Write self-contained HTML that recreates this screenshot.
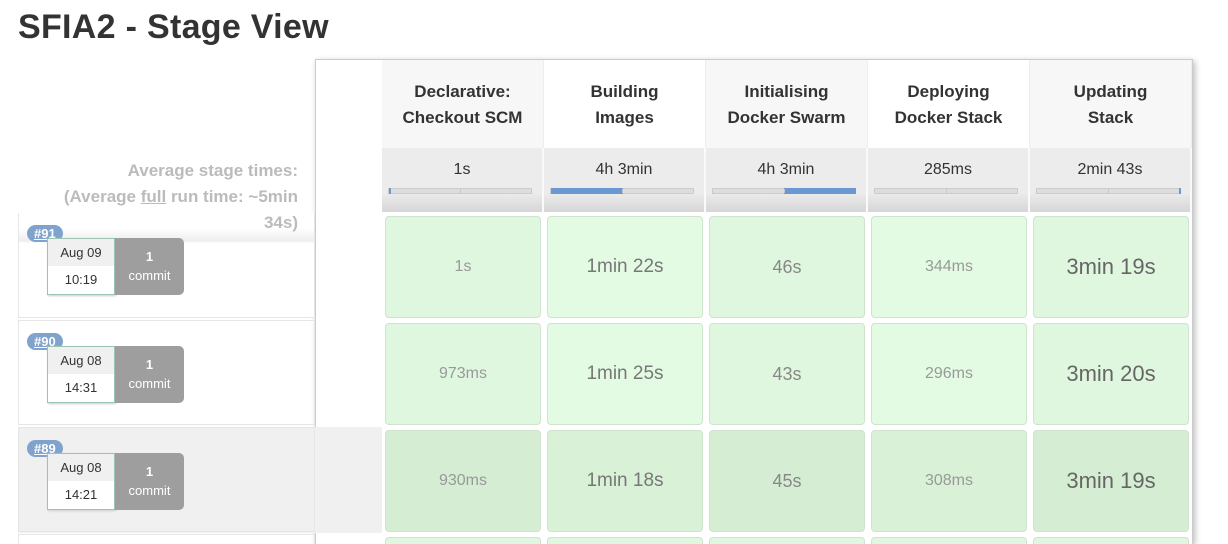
<!DOCTYPE html>
<html><head><meta charset="utf-8"><style>
*{margin:0;padding:0;box-sizing:border-box}
html,body{width:1228px;height:544px;overflow:hidden}
body{background:#fff;font-family:"Liberation Sans","DejaVu Sans",sans-serif;position:relative;color:#333}
.a{position:absolute}
h1{position:absolute;left:18px;top:8px;font-size:34px;font-weight:bold;color:#333;letter-spacing:0.3px}
.hd{position:absolute;top:60px;height:88px;width:162px;text-align:center;font-weight:bold;font-size:17px;line-height:26px;padding-top:19px;color:#333;border-right:1px solid #eee}
.av{position:absolute;top:148px;height:64px;width:162px;text-align:center;font-size:16px;padding-top:13px;background:linear-gradient(#ececec,#ececec 70%,#d6d6d6);border-right:2px solid #fafafa}
.bar{position:absolute;left:6px;top:40px;width:144px;height:6px;background:#ddd;border:1px solid #ccc}
.bar i{position:absolute;top:-1px;height:6px;background:#6b98d0}
.bar b{position:absolute;left:71px;top:0;width:1px;height:4px;background:#c8c8c8}
.c{position:absolute;width:156px;height:102px;border:1px solid #cfe3cf;border-radius:4px;text-align:center;line-height:100px;background:#e0f7df}
.r{position:absolute;left:18px;width:297px;border:1px solid #e6e6e6}
.tag{position:absolute;left:8px;top:12px;background:#7fa3cc;color:#fff;font-weight:bold;font-size:13px;border-radius:9px;padding:1px 7px;text-decoration:underline}
.dt{position:absolute;left:28px;top:25px;width:68px;height:57px;border:1px solid #9bc5b1;background:#fff;font-size:13px;text-align:center;box-shadow:1px 1px 2px #ccc}
.dt div{height:27px;line-height:27px}
.dt div:first-child{background:#f0f0f0}
.cm{position:absolute;left:96px;top:25px;width:69px;height:57px;background:#9e9e9e;border-radius:0 5px 5px 0;color:#fff;font-size:13px;text-align:center;padding-top:9px;line-height:19px}
</style></head><body>
<h1>SFIA2 - Stage View</h1>
<div class="a" style="left:315px;top:59px;width:878px;height:485px;border:1px solid #ccc;border-bottom:none;box-shadow:2px 2px 6px #bbb;background:#fff"></div>

<div class="hd" style="left:382px;background:#f7f7f7">Declarative:<br>Checkout SCM</div>
<div class="hd" style="left:544px;background:#fff">Building<br>Images</div>
<div class="hd" style="left:706px;background:#f7f7f7">Initialising<br>Docker Swarm</div>
<div class="hd" style="left:868px;background:#fff">Deploying<br>Docker Stack</div>
<div class="hd" style="left:1030px;background:#f7f7f7">Updating<br>Stack</div>

<div class="av" style="left:382px">1s<div class="bar"><i style="left:0;width:2px"></i><b></b></div></div>
<div class="av" style="left:544px">4h 3min<div class="bar"><i style="left:0;width:72px"></i><b></b></div></div>
<div class="av" style="left:706px">4h 3min<div class="bar"><i style="left:71px;width:72px"></i><b></b></div></div>
<div class="av" style="left:868px">285ms<div class="bar"><i style="left:0;width:0"></i><b></b></div></div>
<div class="av" style="left:1030px">2min 43s<div class="bar"><i style="left:142px;width:2px"></i><b></b></div></div>

<div class="a" style="left:18px;top:427px;width:364px;height:106px;background:#f0f0f0"></div>
<div class="r" style="top:213px;height:105px;border-top:none;background:linear-gradient(#fff,#fff 15px,#eee 28px,#fff 30px)"><span class="tag">#91</span><div class="dt"><div>Aug 09</div><div>10:19</div></div><div class="cm"><b>1</b><br>commit</div></div>
<div class="r" style="top:320px;height:105px"><span class="tag">#90</span><div class="dt"><div>Aug 08</div><div>14:31</div></div><div class="cm"><b>1</b><br>commit</div></div>
<div class="r" style="top:427px;height:105px;background:#f0f0f0"><span class="tag">#89</span><div class="dt"><div>Aug 08</div><div>14:21</div></div><div class="cm"><b>1</b><br>commit</div></div>
<div class="r" style="top:534px;height:10px;border-bottom:none"></div>

<div class="a" style="left:18px;top:158px;width:280px;text-align:right;font-size:17px;font-weight:bold;color:#bbb;line-height:26px;white-space:nowrap;z-index:5">Average stage times:<br>(Average <u>full</u> run time: ~5min<br>34s)</div>

<div class="c" style="left:385px;top:216px;font-size:16px;color:#999">1s</div>
<div class="c" style="left:547px;top:216px;font-size:19px;color:#777;background:#e4fbe3">1min 22s</div>
<div class="c" style="left:709px;top:216px;font-size:18px;color:#888">46s</div>
<div class="c" style="left:871px;top:216px;font-size:16px;color:#999;background:#e4fbe3">344ms</div>
<div class="c" style="left:1033px;top:216px;font-size:22px;color:#666">3min 19s</div>

<div class="c" style="left:385px;top:323px;font-size:16px;color:#999">973ms</div>
<div class="c" style="left:547px;top:323px;font-size:19px;color:#777;background:#e4fbe3">1min 25s</div>
<div class="c" style="left:709px;top:323px;font-size:18px;color:#888">43s</div>
<div class="c" style="left:871px;top:323px;font-size:16px;color:#999;background:#e4fbe3">296ms</div>
<div class="c" style="left:1033px;top:323px;font-size:22px;color:#666">3min 20s</div>

<div class="c" style="left:385px;top:430px;font-size:16px;color:#999;background:#d5edd3">930ms</div>
<div class="c" style="left:547px;top:430px;font-size:19px;color:#777;background:#d9f1d7">1min 18s</div>
<div class="c" style="left:709px;top:430px;font-size:18px;color:#888;background:#d5edd3">45s</div>
<div class="c" style="left:871px;top:430px;font-size:16px;color:#999;background:#d9f1d7">308ms</div>
<div class="c" style="left:1033px;top:430px;font-size:22px;color:#666;background:#d5edd3">3min 19s</div>

<div class="c" style="left:385px;top:537px;height:7px;border-bottom:none;border-radius:4px 4px 0 0"></div>
<div class="c" style="left:547px;top:537px;height:7px;border-bottom:none;border-radius:4px 4px 0 0"></div>
<div class="c" style="left:709px;top:537px;height:7px;border-bottom:none;border-radius:4px 4px 0 0"></div>
<div class="c" style="left:871px;top:537px;height:7px;border-bottom:none;border-radius:4px 4px 0 0"></div>
<div class="c" style="left:1033px;top:537px;height:7px;border-bottom:none;border-radius:4px 4px 0 0"></div>
</body></html>
